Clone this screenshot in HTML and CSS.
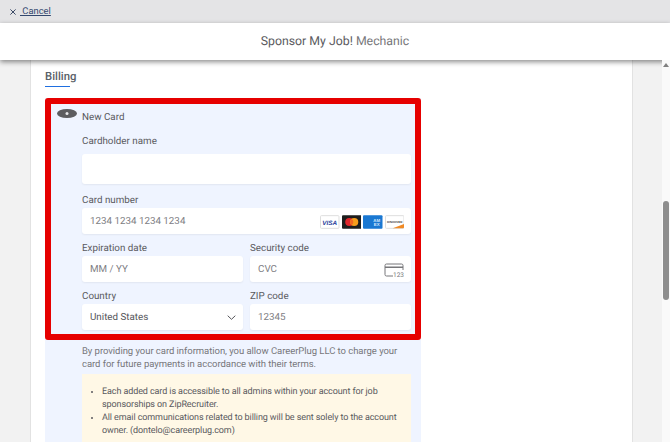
FILE: index.html
```html
<!DOCTYPE html>
<html lang="en">

<head>
  <meta charset="UTF-8"/>
  <title>Sponsor My Job</title>
  <link rel="stylesheet" href="styles.css">
</head>

<body>
<div class="cancel-bar">
  <svg class="cancel-x" width="6" height="6" viewBox="0 0 6 6"><path d="M.4.400l5.200 5.200M5.600.400L.4 5.600" fill="none" stroke="#3c4a66" stroke-width="1"/></svg>
  <a class="cancel-link" href="#">&nbsp;Cancel</a>
</div>
<header class="title-bar">
  <span class="title-main">Sponsor My Job!</span>&nbsp;<span class="title-job">Mechanic</span>
</header>
<div class="page">
  <main class="sheet">
    <h2 class="billing">Billing</h2>
    <section class="panel">
      <div class="highlight"></div>
      <div class="radio-row">
        <svg class="eye" width="20" height="9" viewBox="0 0 20 9"><ellipse cx="10" cy="4.500" rx="10" ry="4.500" fill="#5d5d60"/><circle cx="10" cy="4.500" r="1.500" fill="#e8e8ea"/></svg>
        <span>New Card</span>
      </div>
      <div class="form">
        <div class="field cardholder">
          <label>Cardholder name</label>
          <div class="input"></div>
        </div>
        <div class="field number">
          <label>Card number</label>
          <div class="input">
            <span class="ph">1234 1234 1234 1234</span>
            <div class="brands">
              <svg width="19.500" height="14" viewBox="0 0 20 14"><rect x=".5" y=".5" width="19" height="13" rx="1" fill="#fff" stroke="#ddd"/><text x="10" y="10" text-anchor="middle" class="visa">VISA</text></svg>
              <svg width="19.500" height="14" viewBox="0 0 20 14"><rect width="20" height="14" rx="1" fill="#1d1d1d"/><circle cx="7.500" cy="7" r="4.200" fill="#e0262c"/><circle cx="12.500" cy="7" r="4.200" fill="#f79e1b"/><path d="M10 3.700a4.200 4.200 0 0 1 0 6.600a4.200 4.200 0 0 1 0-6.600z" fill="#f26522"/></svg>
              <svg width="19.500" height="14" viewBox="0 0 20 14"><rect width="20" height="14" rx="1" fill="#1a78d2"/><text x="14" y="6.500" text-anchor="middle" class="amex">AM</text><text x="14" y="11.500" text-anchor="middle" class="amex">EX</text></svg>
              <svg width="19.500" height="14" viewBox="0 0 20 14"><rect x=".5" y=".5" width="19" height="13" rx="1" fill="#fff" stroke="#ddd"/><path d="M8 13.500L19.500 9v3.500a1 1 0 0 1-1 1z" fill="#f08a24"/><text x="10" y="7.800" text-anchor="middle" class="disc">DISCOVER</text></svg>
            </div>
          </div>
        </div>
        <div class="field">
          <label>Expiration date</label>
          <div class="input"><span class="ph">MM / YY</span></div>
        </div>
        <div class="field">
          <label>Security code</label>
          <div class="input">
            <span class="ph">CVC</span>
            <svg class="cvc" width="20" height="14" viewBox="0 0 20 14"><path d="M9 13H2.500A1.500 1.500 0 0 1 1 11.500V2.500A1.500 1.500 0 0 1 2.500 1h15A1.500 1.500 0 0 1 19 2.500V7" fill="none" stroke="#77777a"/><rect x="1" y="3.500" width="18" height="1.500" fill="#77777a"/><text x="20" y="13.500" text-anchor="end" class="cvc-num">123</text></svg>
          </div>
        </div>
        <div class="field">
          <label>Country</label>
          <div class="input">
            <span class="val">United States</span>
            <svg class="chev" width="9" height="5" viewBox="0 0 9 5"><path d="M.7.700l3.800 3.600L8.300.700" fill="none" stroke="#55555a" stroke-width="1"/></svg>
          </div>
        </div>
        <div class="field">
          <label>ZIP code</label>
          <div class="input"><span class="ph">12345</span></div>
        </div>
      </div>
      <p class="terms">By providing your card information, you allow CareerPlug LLC to charge your card for future payments in accordance with their terms.</p>
      <div class="note">
        <ul>
          <li>Each added card is accessible to all admins within your account for job sponsorships on ZipRecruiter.</li>
          <li>All email communications related to billing will be sent solely to the account owner. (dontelo@careerplug.com)</li>
        </ul>
      </div>
    </section>
  </main>
  <div class="scrollbar">
    <div class="arrow"></div>
    <div class="thumb"></div>
  </div>
</div>
</body>

</html>
```
FILE: styles.css
```css
* {
  box-sizing: border-box;
}

html, body {
  height: 442px;
  overflow: hidden;
}

body {
  margin: 0;
  background: #f2f2f2;
  color: #5a5a5e;
  font-family: Roboto, sans-serif;
  font-size: 9.800px;
  text-rendering: geometricPrecision;
}

.cancel-bar {
  height: 23px;
  background: #e4e4e6;
  display: flex;
  align-items: center;
  padding-left: 10px;
  gap: 4px;
}

.cancel-link {
  color: #33486e;
  font-size: 9.400px;
}

.title-bar {
  position: relative;
  height: 37px;
  background: #fff;
  display: flex;
  align-items: center;
  justify-content: center;
  font-size: 12.300px;
  box-shadow: 0 2px 5px rgba(0, 0, 0, .45);
  white-space: pre;
}

.title-job {
  color: #77777b;
}

.page {
  display: flex;
  height: 382px;
  padding-left: 30px;
}

.sheet {
  width: 603px;
  background: #fff;
  border-left: 1px solid #e2e2e2;
  border-right: 1px solid #e2e2e2;
  padding: 10px 0 0 14px;
}

.billing {
  margin: 0;
  font-size: 11.300px;
  line-height: 14px;
  font-weight: 500;
  color: #5a6068;
}

.billing::after {
  content: "";
  display: block;
  width: 25px;
  height: 1px;
  margin-top: 2px;
  background: #1f6fe0;
}

.panel {
  position: relative;
  width: 376px;
  height: 400px;
  margin-top: 11px;
  background: #eff4ff;
  padding: 7px 10px 0 37px;
}

.highlight {
  position: absolute;
  left: 0;
  top: 0;
  width: 376px;
  height: 242px;
  border: 6px solid #e60000;
  border-radius: 3px;
  pointer-events: none;
}

.radio-row {
  display: flex;
  align-items: center;
  height: 24px;
}

.eye {
  position: absolute;
  left: 12px;
  top: 11px;
}

.form {
  display: grid;
  grid-template-columns: 161px 161px;
  column-gap: 7px;
  row-gap: 7px;
  margin-top: 5px;
}

.field {
  display: flex;
  flex-direction: column;
}

.cardholder, .number {
  grid-column: 1 / 3;
}

.cardholder {
  margin-bottom: 2px;
}

.field label {
  height: 15px;
  padding-top: 1px;
  line-height: 14px;
}

.cardholder label {
  margin-bottom: 5px;
}

.input {
  height: 26px;
  background: #fff;
  border-radius: 3px;
  box-shadow: 0 1px 2px rgba(0, 0, 0, .06);
  display: flex;
  align-items: center;
  justify-content: space-between;
  padding: 1px 7px 0 8px;
}

.cardholder .input {
  height: 30px;
}

.ph {
  color: #808084;
}

.val {
  color: #55555a;
}

.brands {
  display: flex;
  gap: 2px;
}

.brands svg {
  display: block;
}

.visa {
  font: italic 700 6.500px "Liberation Sans", sans-serif;
  fill: #26409a;
}

.amex {
  font: 700 4.500px "Liberation Sans", sans-serif;
  fill: #d6e8fb;
}

.disc {
  font: 700 3px "Liberation Sans", sans-serif;
  fill: #333;
}

.cvc-num {
  font: 6.500px Roboto, sans-serif;
  fill: #77777a;
}

.terms {
  margin: 15px 0 0;
  width: 329px;
  font-size: 9.500px;
  letter-spacing: -.05px;
  line-height: 13.200px;
  color: #77777b;
}

.note {
  width: 329px;
  height: 120px;
  margin-top: 3px;
  background: #fff8e6;
  padding: 12px 8px;
  font-size: 9px;
  letter-spacing: -.1px;
  line-height: 13px;
}

.note ul {
  margin: 0;
  padding-left: 12px;
}

.scrollbar {
  margin-left: 29px;
  width: 8px;
  background: #fafafa;
  flex: none;
  position: relative;
}

.arrow {
  width: 0;
  margin: 3px 0 0 1px;
  border-left: 3px solid transparent;
  border-right: 3px solid transparent;
  border-bottom: 4px solid #808080;
}

.thumb {
  position: absolute;
  top: 141px;
  left: 1px;
  width: 6px;
  height: 99px;
  border-radius: 3px;
  background: #8e8e8e;
}
```
